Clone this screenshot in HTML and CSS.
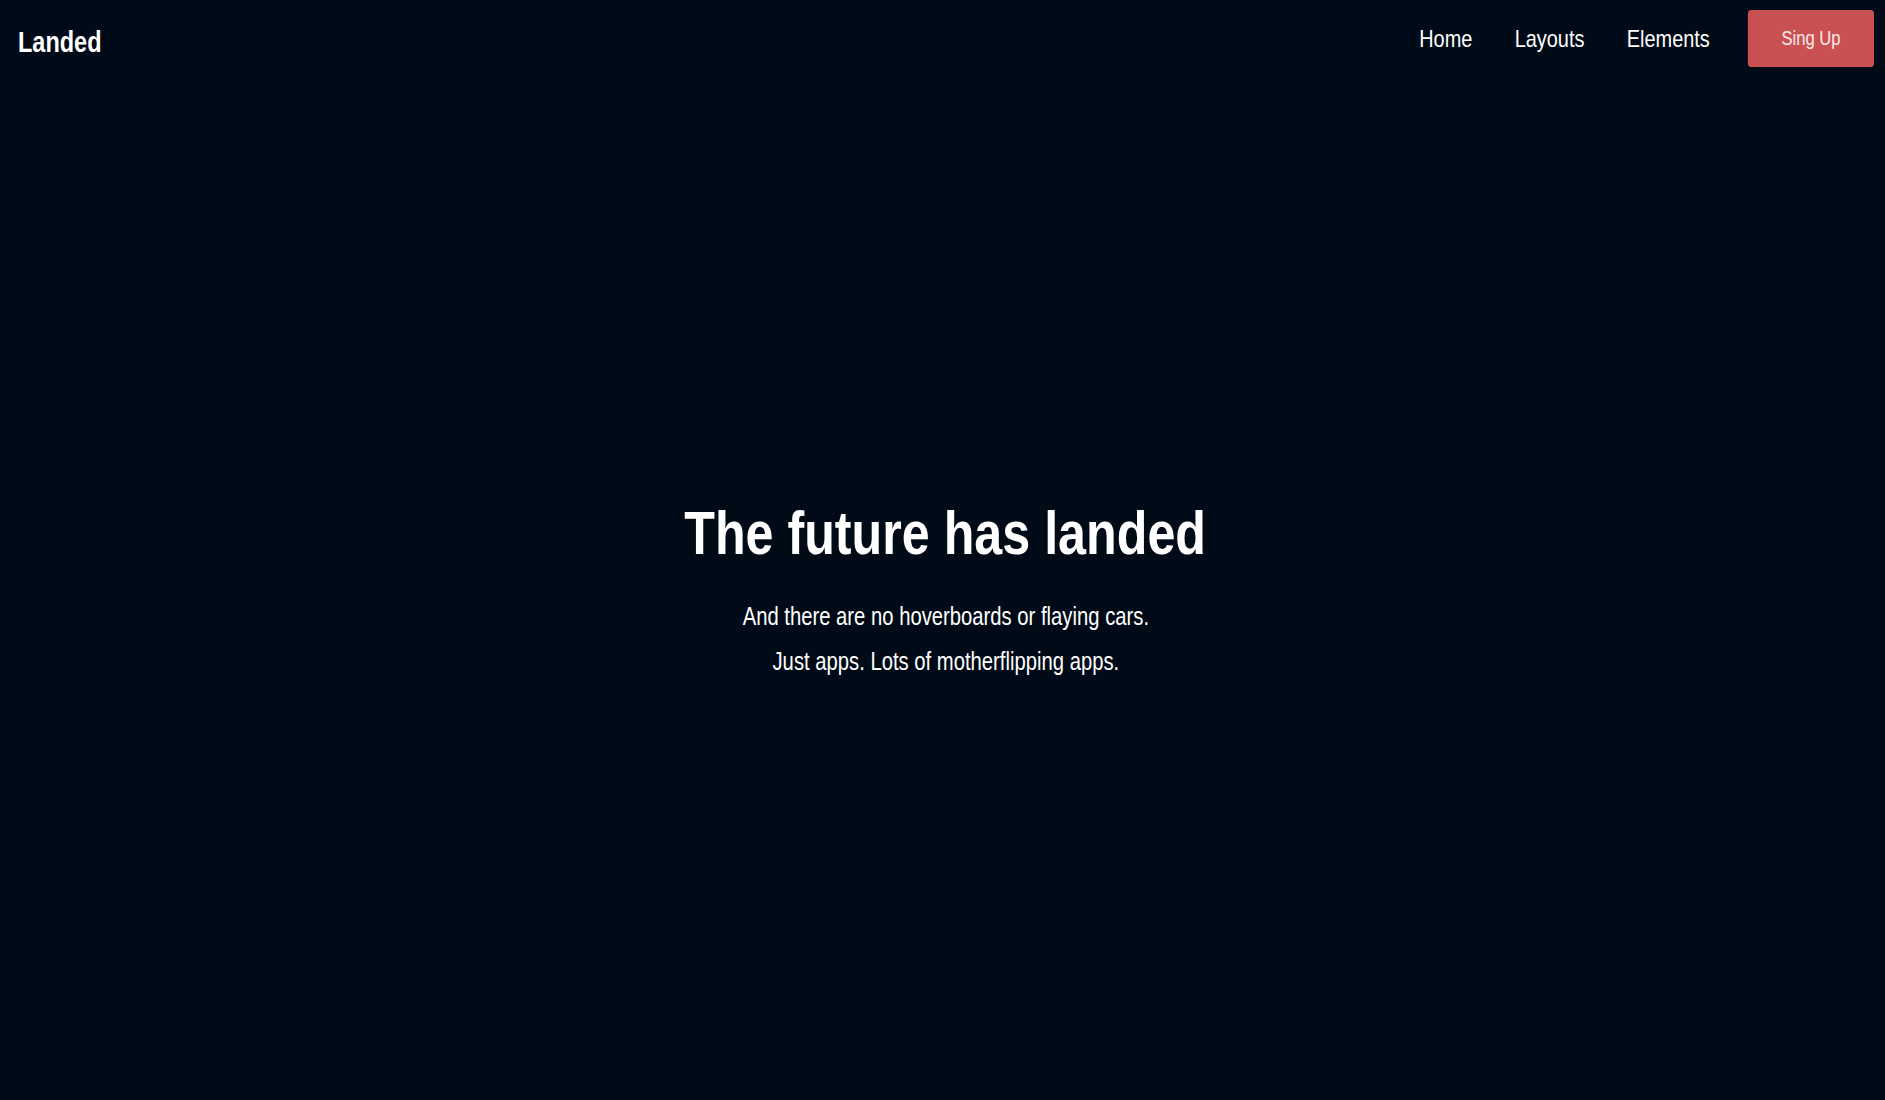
FILE: index.html
```html
<!DOCTYPE html>
<html lang="en">
<head>
<meta charset="utf-8">
<title>Landed</title>
<link rel="stylesheet" href="styles.css">
</head>
<body>
<div class="page">
  <header class="header">
    <a class="logo" href="#">Landed</a>
    <nav class="nav">
      <a class="nav-link" href="#">Home</a>
      <a class="nav-link" href="#">Layouts</a>
      <a class="nav-link" href="#">Elements</a>
      <a class="btn-signup" href="#">Sing Up</a>
    </nav>
  </header>
  <main class="hero">
    <h1 class="hero-title">The future has landed</h1>
    <p class="hero-text">And there are no hoverboards or flaying cars.<br>Just apps. Lots of motherflipping apps.</p>
  </main>
</div>
</body>
</html>
```

FILE: styles.css
```css
html, body {
  margin: 0;
  padding: 0;
  background: #010b17;
}
body {
  font-family: "Liberation Sans", Arial, sans-serif;
  color: #ffffff;
}
a {
  color: inherit;
  text-decoration: none;
}
.page {
  height: 100vh;
  display: flex;
  flex-direction: column;
  overflow: hidden;
}
.header {
  height: 77px;
  display: flex;
  align-items: center;
  justify-content: space-between;
  padding: 0 11px 0 18px;
  flex-shrink: 0;
}
.logo {
  display: inline-block;
  font-size: 29px;
  line-height: 29px;
  font-weight: bold;
  margin-top: 7px;
  transform: scaleX(0.81);
  transform-origin: left center;
}
.nav {
  display: flex;
  align-items: center;
  gap: 51px;
  transform: scaleX(0.83);
  transform-origin: right center;
}
.nav-link {
  font-size: 24px;
  line-height: 24px;
}
.btn-signup {
  margin-left: -5px;
  width: 152px;
  height: 57px;
  display: flex;
  align-items: center;
  justify-content: center;
  background: #c95151;
  border-radius: 4px;
  font-size: 20px;
  line-height: 20px;
  color: #fbeaea;
  padding-bottom: 2px;
  box-sizing: border-box;
}
.hero {
  flex: 1;
  display: flex;
  flex-direction: column;
  align-items: center;
  justify-content: center;
  padding-top: 8px;
  padding-left: 6px;
  text-align: center;
}
.hero-title {
  margin: 0;
  font-size: 62px;
  line-height: 62px;
  font-weight: bold;
  transform: scaleX(0.81);
}
.hero-text {
  margin: 30px 0 0;
  font-size: 25px;
  line-height: 45px;
  transform: scaleX(0.81);
}
```
